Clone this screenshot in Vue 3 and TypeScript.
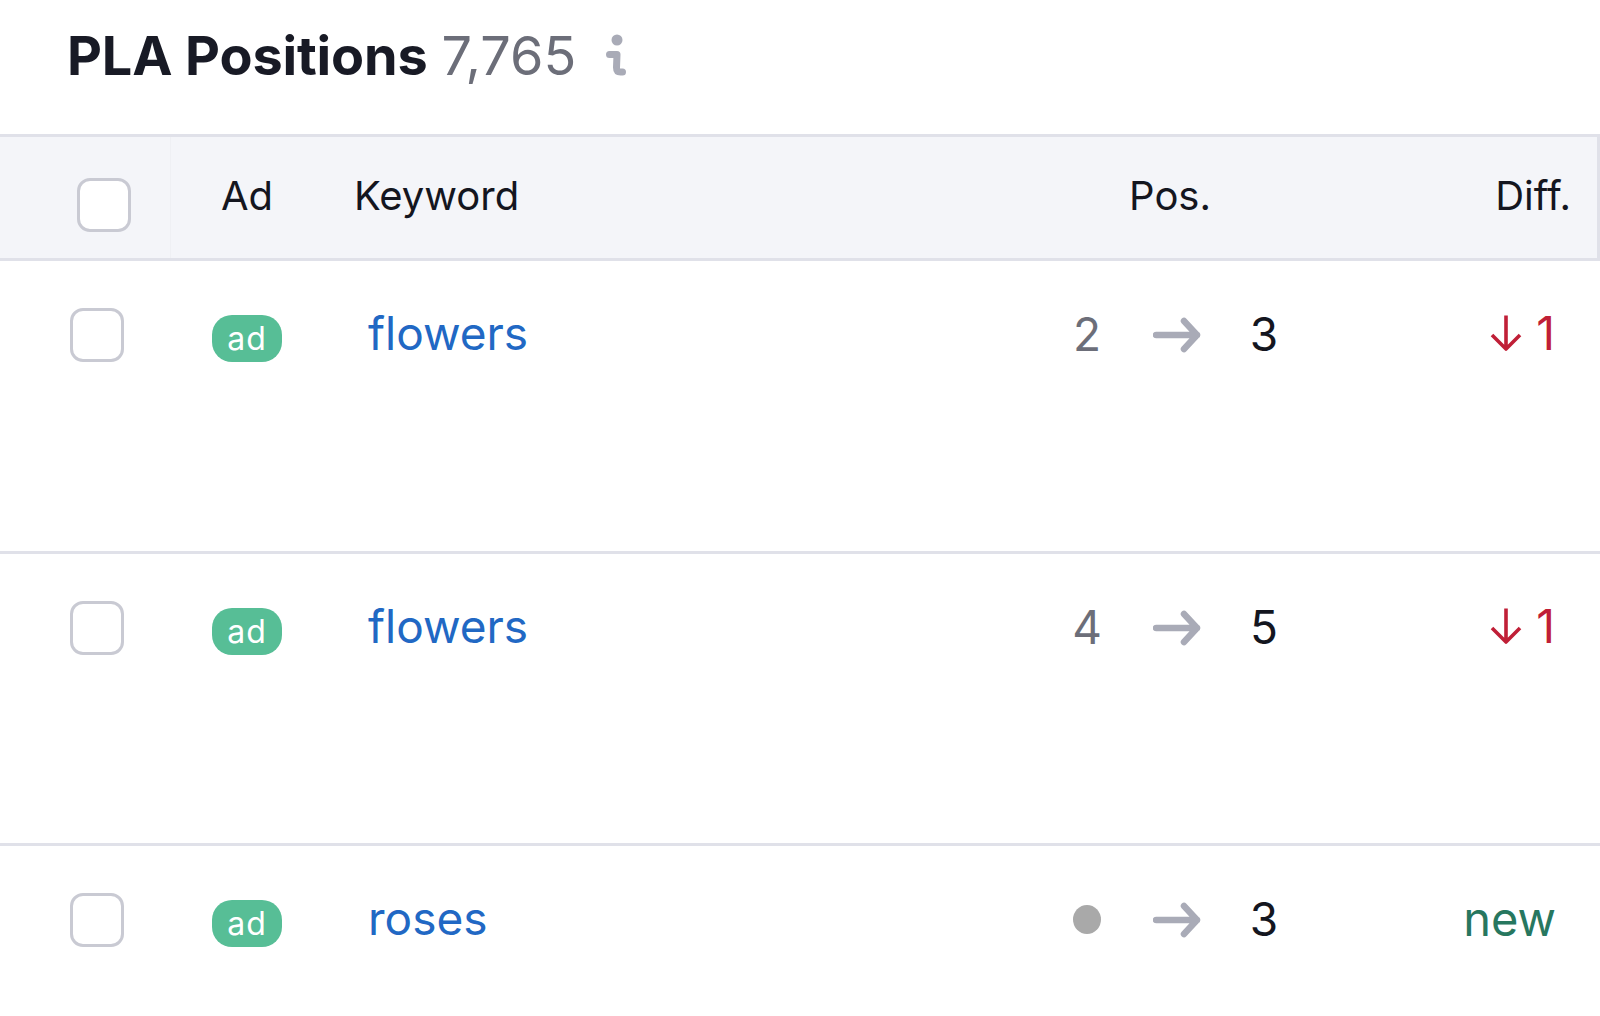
<script setup lang="ts">
interface Row { kw: string; from: string | null; to: string; diff: string | null }
const rows: Row[] = [
  { kw: 'flowers', from: '2', to: '3', diff: '1' },
  { kw: 'flowers', from: '4', to: '5', diff: '1' },
  { kw: 'roses', from: null, to: '3', diff: null },
]
</script>

<template>
  <div class="page">
    <div class="title">
      <span class="name">PLA Positions</span>
      <span class="count">7,765</span>
      <svg class="info" width="22" height="43" viewBox="0 0 22 43" fill="none">
        <circle cx="12" cy="6" r="5.5" fill="#a9abb7" />
        <path d="M4.5 20.5H12L11.5 33.5Q11.5 38 15.5 38H17.5" stroke="#a9abb7" stroke-width="7" stroke-linecap="round" stroke-linejoin="round" />
      </svg>
    </div>
    <div class="head">
      <div class="hcheck"><span class="box"></span></div>
      <div class="had">Ad</div>
      <div class="hkw">Keyword</div>
      <div class="hpos">Pos.</div>
      <div class="hdiff">Diff.</div>
    </div>
    <div v-for="(r, i) in rows" :key="i" class="row" :class="{ last: i === rows.length - 1 }">
      <div class="rcheck"><span class="box"></span></div>
      <div class="rad"><span class="badge">ad</span></div>
      <a class="kw">{{ r.kw }}</a>
      <div class="pos">
        <span class="from">
          <template v-if="r.from">{{ r.from }}</template>
          <i v-else class="dot"></i>
        </span>
        <svg class="arrow" width="48" height="38" viewBox="0 0 48 38" fill="none">
          <path d="M3 19h41M31 5l13 14-13 14" stroke="#a9abb7" stroke-width="6.5" stroke-linecap="round" stroke-linejoin="round" />
        </svg>
        <span class="to">{{ r.to }}</span>
      </div>
      <div class="diff">
        <template v-if="r.diff">
          <svg class="down" width="32" height="38" viewBox="0 0 32 38" fill="none">
            <path d="M16 1.5v33M2 21l14 14 14-14" stroke="#c01f37" stroke-width="3.6" stroke-linejoin="round" />
          </svg>
          <span class="num">{{ r.diff }}</span>
        </template>
        <span v-else class="new">new</span>
      </div>
    </div>
  </div>
</template>

<style>
html, body { margin: 0; background: #fff; }
</style>

<style scoped>
.page {
  width: 1600px;
  height: 1016px;
  overflow: hidden;
  background: #fff;
  font-family: Inter, "Liberation Sans", sans-serif;
  color: #14161f;
}
.title {
  height: 134px;
  box-sizing: border-box;
  padding: 22px 0 0 67px;
  display: flex;
  align-items: flex-start;
  font-size: 54px;
  line-height: 68px;
}
.name { font-weight: 700; color: #181a25; letter-spacing: -0.15px; }
.count { margin-left: 14px; color: #6c6e79; font-weight: 400; }
.info { margin: 12px 0 0 29px; }
.head {
  height: 127px;
  box-sizing: border-box;
  border-top: 3px solid #e0e1e9;
  border-bottom: 3px solid #e0e1e9;
  border-right: 3px solid #e0e1e9;
  background: #f4f5f9;
  display: grid;
  grid-template-columns: 171px 183px 1fr 260px 211px;
  align-items: center;
  font-size: 40px;
}
.hcheck { height: 100%; padding: 41px 0 0 77px; box-sizing: border-box; border-right: 1px solid #eff0f4; }
.had { padding-left: 50px; margin-top: -4px; }
.hkw { margin-top: -4px; }
.hpos { margin-top: -4px; text-align: right; padding-right: 175px; }
.hdiff { margin-top: -4px; height: 100%; display: flex; align-items: center; justify-content: flex-end; padding-right: 26px; }
.box {
  display: block;
  width: 54px;
  height: 54px;
  box-sizing: border-box;
  border: 3px solid #c9cad3;
  border-radius: 13px;
  background: #fff;
}
.row {
  height: 292.5px;
  box-sizing: border-box;
  border-bottom: 3px solid #e0e1e9;
  display: grid;
  grid-template-columns: 212px 156px 1fr 303px 237px;
  align-items: start;
  padding-top: 47px;
}
.row.last { border-bottom: 0; }
.rcheck { padding-left: 70px; }
.rad { padding-top: 7px; }
.badge {
  display: block;
  width: 70px;
  height: 47px;
  border-radius: 20px;
  background: #57be96;
  color: #fff;
  font-size: 32px;
  letter-spacing: 1px;
  font-weight: 400;
  line-height: 47px;
  text-align: center;
}
.kw {
  color: #2168c4;
  font-size: 46px;
  line-height: 54px;
  margin-top: -2px;
}
.pos {
  display: flex;
  align-items: center;
  height: 54px;
  margin-top: -2px;
  font-size: 46px;
}
.from { width: 54px; padding-top: 2px; text-align: center; color: #6c6e79; display: flex; justify-content: center; }
.dot { display: block; width: 28px; height: 29px; border-radius: 50%; background: #a9a9a9; }
.arrow { margin-left: 39px; margin-top: 4px; }
.to { margin-left: 36px; padding-top: 2px; width: 54px; text-align: center; color: #14161f; }
.diff {
  display: flex;
  align-items: center;
  justify-content: flex-end;
  height: 54px;
  margin-top: -2px;
  padding-right: 45px;
  font-size: 46px;
}
.down { margin-right: 14px; }
.num { color: #c01f37; }
.new { color: #27775f; font-size: 47px; margin-right: -1px; }
</style>
